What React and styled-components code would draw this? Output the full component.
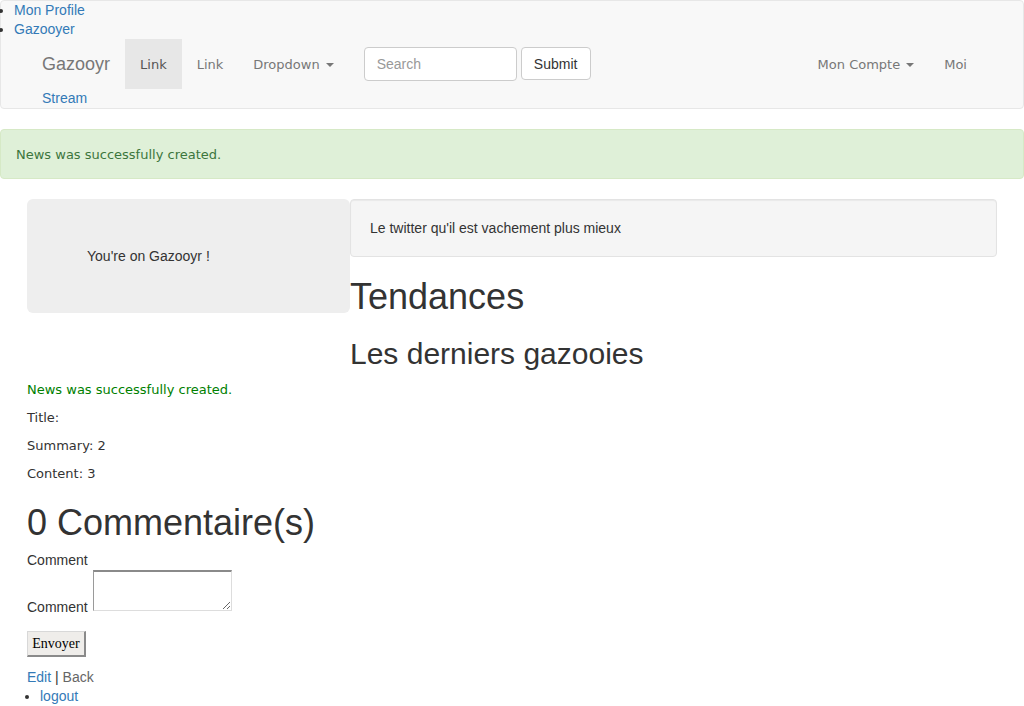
import React from "react";
import styled, { createGlobalStyle } from "styled-components";

const Global = createGlobalStyle`
  html, body { margin: 0; padding: 0; background: #fff; }
  body {
    font-family: "Liberation Sans", Helvetica, Arial, sans-serif;
    font-size: 14px;
    line-height: 1.42857;
    color: #333;
  }
  * { box-sizing: border-box; }
  a { color: #337ab7; text-decoration: none; }
`;

const Navbar = styled.nav`
  width: 100%;
  background: #f8f8f8;
  border: 1px solid #e7e7e7;
  border-radius: 4px;
  margin-bottom: 20px;
`;

const TopList = styled.ul`
  margin: 0;
  padding-left: 13px;
  line-height: 19px;
`;

const NavInner = styled.div`
  width: 970px;
  margin: 0 auto;
  display: flex;
  height: 50px;
`;

const Brand = styled.a`
  padding: 1px 15px 0;
  font-size: 18px;
  line-height: 49px;
  color: #777;
`;

const NavItem = styled.a`
  padding: 2px 15px 0;
  font-family: "DejaVu Sans", Verdana, sans-serif;
  font-size: 13px;
  color: ${(p) => (p.$active ? "#555" : "#777")};
  background: ${(p) => (p.$active ? "#e7e7e7" : "transparent")};
  display: flex;
  align-items: center;
  white-space: nowrap;
`;

const Caret = styled.span`
  display: inline-block;
  width: 0;
  height: 0;
  margin-left: 6px;
  border-top: 4px solid #777;
  border-left: 4px solid transparent;
  border-right: 4px solid transparent;
`;

const SearchForm = styled.form`
  display: flex;
  align-items: flex-end;
  gap: 4px;
  padding: 8px 15px 0;
  height: 42px;
`;

const SearchInput = styled.input`
  width: 153px;
  height: 34px;
  padding: 6px 12px;
  font-family: "Liberation Sans", Helvetica, Arial, sans-serif;
  font-size: 14px;
  color: #555;
  border: 1px solid #ccc;
  border-radius: 4px;
  background: #fff;
  outline: none;
  &::placeholder { color: #999; }
`;

const SubmitBtn = styled.button`
  width: 70px;
  height: 33px;
  font-family: "Liberation Sans", Helvetica, Arial, sans-serif;
  font-size: 14px;
  color: #333;
  background: #fff;
  border: 1px solid #ccc;
  border-radius: 4px;
  padding: 0 12px;
  margin-bottom: 1px;
`;

const RightNav = styled.div`
  margin-left: auto;
  margin-right: 15px;
  display: flex;
`;

const StreamRow = styled.div`
  width: 970px;
  margin: 0 auto;
  padding-left: 15px;
  line-height: 19px;
`;

const Alert = styled.div`
  background: #dff0d8;
  border: 1px solid #d6e9c6;
  border-radius: 4px;
  color: #3c763d;
  padding: 16px 15px 14px;
  font-family: "DejaVu Sans", Verdana, sans-serif;
  font-size: 13px;
  line-height: 18px;
  margin-bottom: 20px;
`;

const Container = styled.div`
  width: 970px;
  margin: 0 auto;
`;

const Row = styled.div`
  display: flex;
  align-items: flex-start;
`;

const LeftCol = styled.div`
  width: 323px;
  flex-shrink: 0;
`;

const RightCol = styled.div`
  flex: 1;
  display: flow-root;
`;

const Jumbotron = styled.div`
  background: #eee;
  border-radius: 6px;
  padding: 47px 60px;
  line-height: 20px;
`;

const Well = styled.div`
  background: #f5f5f5;
  border: 1px solid #e3e3e3;
  border-radius: 4px;
  padding: 19px;
  line-height: 18px;
  margin-bottom: 20px;
  box-shadow: inset 0 1px 1px rgba(0, 0, 0, 0.05);
`;

const H1 = styled.h1`
  font-size: 36px;
  font-weight: 500;
  line-height: 1.1;
  margin: 20px 0 ${(p) => (p.$tight ? "8px" : "10px")};
  color: #333;
`;

const H2 = styled.h2`
  font-size: 30px;
  font-weight: 500;
  line-height: 1.1;
  margin: 20px 0 11px;
  color: #333;
`;

const Para = styled.p`
  font-family: "DejaVu Sans", Verdana, sans-serif;
  font-size: 13px;
  line-height: 18px;
  margin: 0 0 10px;
  color: ${(p) => (p.$notice ? "green" : "#333")};
`;

const FieldLabel = styled.div`
  line-height: 20px;
`;

const FieldRow = styled.div`
  display: flex;
  align-items: flex-end;
  gap: 5px;
`;

const InlineLabel = styled.label`
  line-height: 20px;
  margin-bottom: -6px;
`;

const TextArea = styled.textarea`
  width: 139px;
  height: 41px;
  resize: both;
  border-top: 2px solid #8a8a8a;
  border-left: 1px solid #9a9a9a;
  border-right: 1px solid #ddd;
  border-bottom: 1px solid #ddd;
  background: #fff;
  margin: 0;
`;

const SendBtn = styled.button`
  display: block;
  margin-top: 20px;
  width: 59px;
  height: 26px;
  padding: 0;
  font-family: "Liberation Serif", "Times New Roman", serif;
  font-size: 14px;
  color: #000;
  background: #efedea;
  border-style: solid;
  border-width: 1px 2px 2px 1px;
  border-color: #d8d8d8 #8a8a8a #8a8a8a #d8d8d8;
`;

const LinksLine = styled.div`
  margin-top: 10px;
  line-height: 20px;
`;

const Muted = styled.span`
  color: #666;
`;

const BottomList = styled.ul`
  margin: 0;
  padding-left: 13px;
  line-height: 18px;
`;

export default function App() {
  return (
    <>
      <Global />
      <Navbar>
        <TopList>
          <li><a href="#">Mon Profile</a></li>
          <li><a href="#">Gazooyer</a></li>
        </TopList>
        <NavInner>
          <Brand href="#">Gazooyr</Brand>
          <NavItem href="#" $active>Link</NavItem>
          <NavItem href="#">Link</NavItem>
          <NavItem href="#">Dropdown <Caret /></NavItem>
          <SearchForm onSubmit={(e) => e.preventDefault()}>
            <SearchInput placeholder="Search" />
            <SubmitBtn type="submit">Submit</SubmitBtn>
          </SearchForm>
          <RightNav>
            <NavItem href="#">Mon Compte <Caret /></NavItem>
            <NavItem href="#">Moi</NavItem>
          </RightNav>
        </NavInner>
        <StreamRow><a href="#">Stream</a></StreamRow>
      </Navbar>
      <Alert>News was successfully created.</Alert>
      <Container>
        <Row>
          <LeftCol>
            <Jumbotron>You're on Gazooyr !</Jumbotron>
          </LeftCol>
          <RightCol>
            <Well>Le twitter qu'il est vachement plus mieux</Well>
            <H1>Tendances</H1>
            <H2>Les derniers gazooies</H2>
          </RightCol>
        </Row>
        <Para $notice>News was successfully created.</Para>
        <Para>Title:</Para>
        <Para>Summary: 2</Para>
        <Para>Content: 3</Para>
        <H1 $tight>0 Commentaire(s)</H1>
        <FieldLabel>Comment</FieldLabel>
        <FieldRow>
          <InlineLabel>Comment</InlineLabel>
          <TextArea />
        </FieldRow>
        <SendBtn>Envoyer</SendBtn>
        <LinksLine>
          <a href="#">Edit</a> | <Muted>Back</Muted>
        </LinksLine>
        <BottomList>
          <li><a href="#">logout</a></li>
        </BottomList>
      </Container>
    </>
  );
}
